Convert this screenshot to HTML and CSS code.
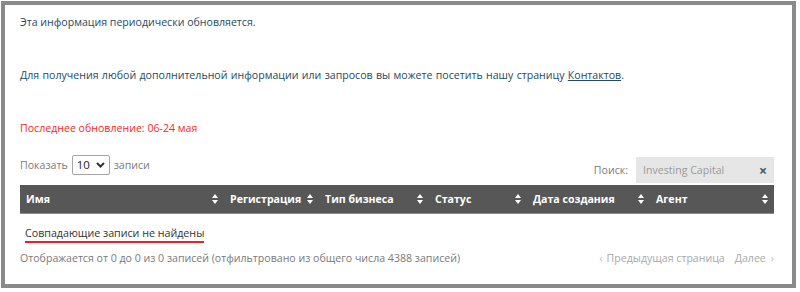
FILE: index.html
```html
<!DOCTYPE html>
<html lang="ru">
<head>
    <meta charset="UTF-8">
    <meta name="viewport" content="width=device-width, initial-scale=1.0">
    <title>Реестр</title>
    <link rel="stylesheet" href="styles.css">
</head>
<body>
    <div class="frame">
        <div class="notes">
            <p>Эта информация периодически обновляется.</p>
            <p class="wide">Для получения любой дополнительной информации или запросов вы можете посетить нашу страницу <a href="#">Контактов</a>.</p>
            <p class="updated">Последнее обновление: 06-24 мая</p>
        </div>

        <div class="controls">
            <label class="length">Показать
                <span class="select">10
                    <svg width="9" height="6" viewBox="0 0 9 6"><path d="M1 1l3.5 3.5L8 1" fill="none" stroke="#333" stroke-width="2"/></svg>
                </span>
                записи</label>
            <label class="search">Поиск:
                <span class="search-box">Investing Capital <span class="clear">&times;</span></span>
            </label>
        </div>

        <table class="grid">
            <thead>
                <tr>
                    <th class="c1">Имя<i class="sort"></i></th>
                    <th class="c2">Регистрация<i class="sort"></i></th>
                    <th class="c3">Тип бизнеса<i class="sort"></i></th>
                    <th class="c4">Статус<i class="sort"></i></th>
                    <th class="c5">Дата создания<i class="sort"></i></th>
                    <th class="c6">Агент<i class="sort"></i></th>
                </tr>
            </thead>
            <tbody>
                <tr>
                    <td colspan="6"><span class="empty">Совпадающие записи не найдены</span></td>
                </tr>
            </tbody>
        </table>

        <div class="footer">
            <span class="info">Отображается от 0 до 0 из 0 записей (отфильтровано из общего числа 4388 записей)</span>
            <span class="pager">
                <span class="prev">Предыдущая страница</span>
                <span class="next">Далее</span>
            </span>
        </div>
    </div>
</body>
</html>
```

FILE: styles.css
```css
body, html {
    margin: 0;
    padding: 0;
    background-color: #ffffff;
    font-family: "Open Sans", Arial, sans-serif;
    font-size: 10.6px;
}
body {
    padding: 1px 4px 1px 1px;
}
.frame {
    border: 4px solid #8a8a8a;
    height: 279px;
    padding: 0 18px 0 15px;
}
.notes p {
    margin: 0 0 35px 0;
    line-height: 18px;
    color: #264960;
}
.notes p:first-child {
    margin-top: 8px;
}
.notes .wide {
    word-spacing: 0.6px;
}
.notes a {
    color: #264960;
    text-decoration: underline;
}
.notes .updated {
    color: #f22a2a;
    margin-bottom: 16px;
}
.controls {
    display: flex;
    justify-content: space-between;
    align-items: center;
    color: #7a7a7a;
    height: 32px;
}
.length {
    display: flex;
    align-items: center;
    gap: 4px;
    margin-top: -9px;
}
.select {
    display: inline-flex;
    align-items: center;
    justify-content: space-between;
    width: 28px;
    height: 18px;
    padding: 0 4px;
    border: 1px solid #a5a5a5;
    border-radius: 2px;
    color: #222222;
    font-size: 11.5px;
}
.search {
    display: flex;
    align-items: center;
    gap: 8px;
    margin-top: 2px;
}
.search-box {
    display: flex;
    align-items: center;
    justify-content: space-between;
    width: 124px;
    height: 26px;
    padding: 0 7px;
    background-color: #e6e6e6;
    color: #9a9a9a;
}
.clear {
    color: #3b5b70;
    font-weight: bold;
    font-size: 14px;
}
.grid {
    width: 100%;
    border-collapse: collapse;
    table-layout: fixed;
    margin-top: 0;
}
.grid th {
    box-sizing: border-box;
    position: relative;
    height: 28px;
    padding: 0 20px 0 6px;
    background-color: #575757;
    border-bottom: 1px solid #8c8c8c;
    color: #ffffff;
    font-weight: bold;
    text-align: left;
    white-space: nowrap;
}
.c1 { width: 204px; }
.c2 { width: 95px; }
.c3 { width: 110px; }
.c4 { width: 98px; }
.c5 { width: 123px; }
.sort {
    position: absolute;
    right: 6px;
    top: 9px;
    width: 0;
    height: 0;
    border-left: 3px solid transparent;
    border-right: 3px solid transparent;
    border-bottom: 4px solid #ffffff;
}
.sort::after {
    content: "";
    position: absolute;
    left: -3px;
    top: 6px;
    border-left: 3px solid transparent;
    border-right: 3px solid transparent;
    border-top: 4px solid #ffffff;
}
.grid td {
    padding: 11px 5px 0 5px;
    color: #333333;
    font-size: 10.7px;
}
.empty {
    display: inline-block;
    line-height: 16px;
    border-bottom: 2px solid #e8222a;
}
.footer {
    display: flex;
    justify-content: space-between;
    align-items: center;
    margin-top: 8px;
    color: #7a7a7a;
}
.pager {
    color: #a8a8a8;
    display: flex;
    gap: 10px;
}
.prev::before {
    content: "\2039";
    color: #bdbdbd;
    margin-right: 4px;
}
.next::after {
    content: "\203A";
    color: #bdbdbd;
    margin-left: 5px;
}
```
